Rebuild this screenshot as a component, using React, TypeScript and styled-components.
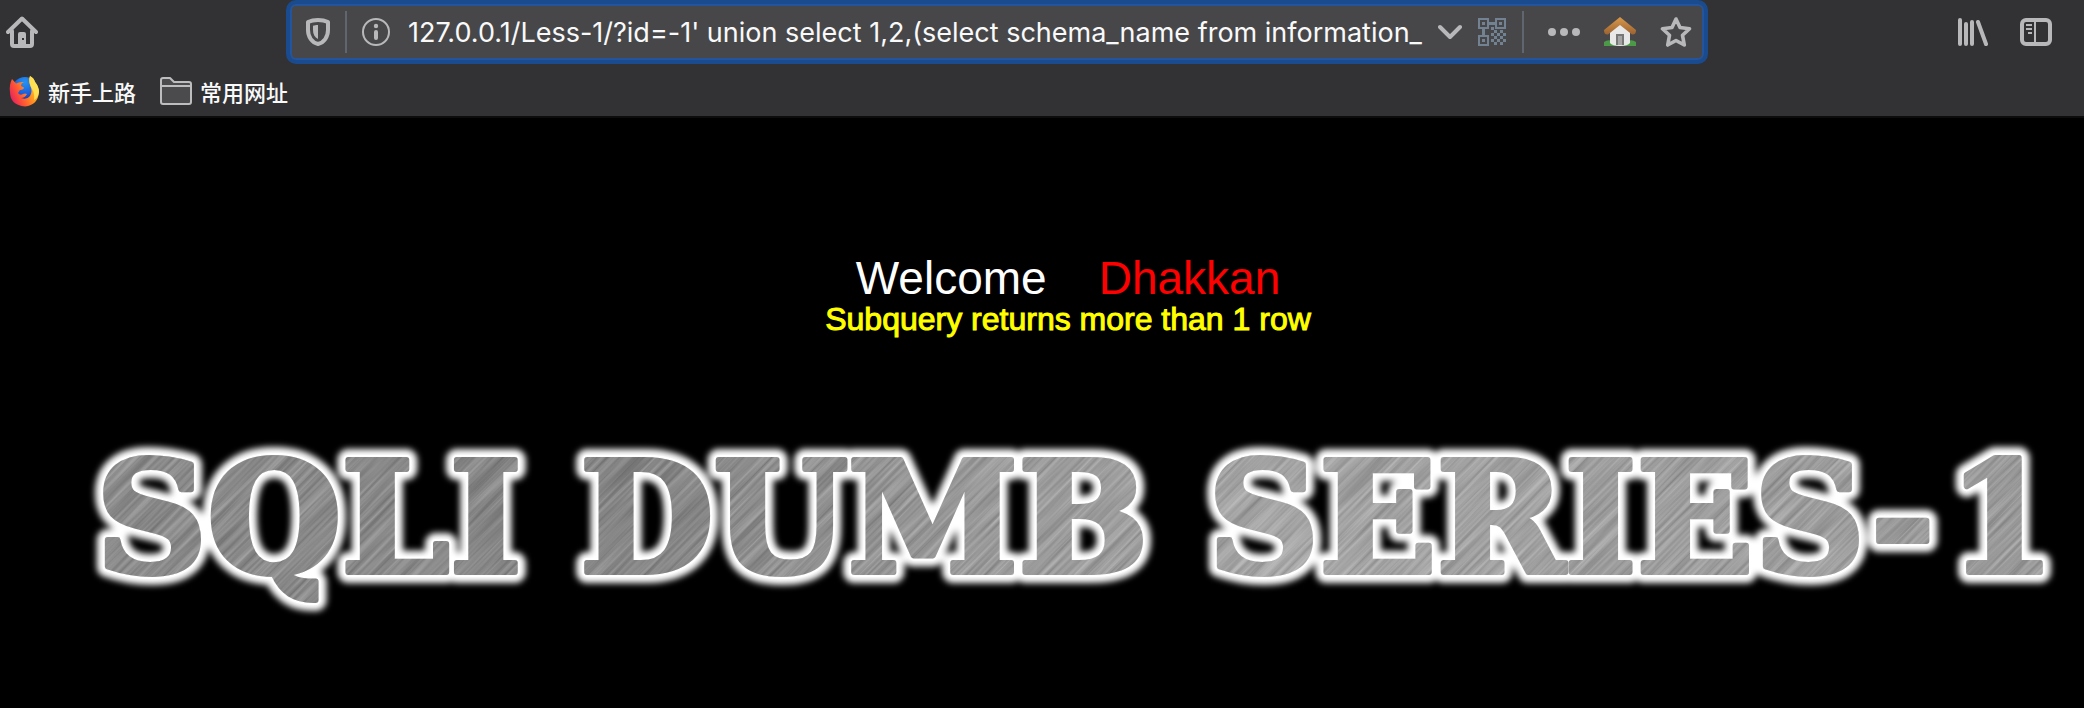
import React from "react";
import styled, { createGlobalStyle } from "styled-components";

const GlobalStyle = createGlobalStyle`
  * { box-sizing: border-box; }
  html, body { margin: 0; background: #000; }
  body { font-family: "Liberation Sans", "Noto Sans CJK SC", sans-serif; }
  svg { display: block; }
`;

const Chrome = styled.header`
  background: #323234;
  border-bottom: 2px solid #0c0c0d;
`;

const NavBar = styled.nav`
  display: flex;
  align-items: center;
  justify-content: space-between;
  height: 64px;
  padding: 0 32px 0 6px;
`;

const IconButton = styled.button<{ $width?: number }>`
  display: flex;
  flex: none;
  align-items: center;
  justify-content: center;
  width: ${(p) => p.$width ?? 32}px;
  height: 32px;
  padding: 0;
  border: 0;
  background: none;
  color: #b8b8ba;
`;

const UrlBar = styled.form`
  display: flex;
  flex: 1;
  align-items: center;
  min-width: 0;
  height: 64px;
  margin: 0 250px 0 248px;
  padding: 0 12px 0 16px;
  border: 4px solid #1a4b8f;
  border-radius: 10px;
  background: #474749;
  box-shadow: inset 0 0 0 2px #24559c;
`;

const Separator = styled.span`
  flex: none;
  width: 2px;
  height: 42px;
  background: #5f6670;
`;

const UrlInput = styled.input`
  flex: 1;
  min-width: 0;
  height: 44px;
  margin: 0 14px 0 18px;
  padding: 0;
  border: 0;
  outline: 0;
  background: none;
  color: #f9f9fa;
  font: 27px Inter, sans-serif;
`;

const Group = styled.div<{ $gap: number; $pad?: string }>`
  display: flex;
  flex: none;
  align-items: center;
  gap: ${(p) => p.$gap}px;
  padding: ${(p) => p.$pad ?? "0"};
`;

const Bookmarks = styled.nav`
  display: flex;
  align-items: center;
  gap: 24px;
  height: 52px;
  padding: 2px 8px 0;
`;

const Bookmark = styled.a`
  display: flex;
  align-items: center;
  gap: 8px;
  color: #f9f9fa;
  font: 500 22px/32px "Noto Sans CJK SC", sans-serif;
  text-decoration: none;
`;

const Message = styled.main`
  padding: 135px 0 0 52px;
  text-align: center;
`;

const Welcome = styled.h1`
  display: flex;
  justify-content: center;
  gap: 52px;
  margin: 0;
  color: #fff;
  font-size: 46px;
  font-weight: 400;
  line-height: 50px;
`;

const Name = styled.span`
  color: #f00;
`;

const ErrorText = styled.p`
  margin: 0;
  color: #ff0;
  font-size: 32px;
  line-height: 32px;
  -webkit-text-stroke: 1px #ff0;
`;

const Banner = styled.svg`
  width: 100%;
  height: auto;
  margin-top: 95px;
`;

const HomeIcon = () => (
  <svg width="32" height="32" viewBox="0 0 32 32" fill="none" stroke="currentColor" strokeLinejoin="round" strokeLinecap="round">
    <path d="M2 16 16 2.500 30 16" strokeWidth="4" />
    <path d="M6 15V28q0 2 2 2H24q2 0 2-2V15" strokeWidth="4" />
    <path d="M12 30V18q0-2 2-2h4q2 0 2 2V30z" fill="currentColor" stroke="none" />
    <rect x="16" y="22" width="2" height="2" fill="#323234" stroke="none" />
  </svg>
);

const ShieldIcon = () => (
  <svg width="24" height="28" viewBox="0 0 24 28">
    <path d="M12 2C8 2 5 2.600 2 4v8c0 7 4 12.500 10 14 6-1.500 10-7 10-14V4C19 2.600 16 2 12 2z" fill="none" stroke="currentColor" strokeWidth="4" strokeLinejoin="round" />
    <path d="M12 7c-2 0-3.500.3-5 .8V12c0 4 1.700 7.500 5 9z" fill="currentColor" />
  </svg>
);

const InfoIcon = () => (
  <svg width="28" height="28" viewBox="0 0 28 28" fill="currentColor">
    <circle cx="14" cy="14" r="13" fill="none" stroke="currentColor" strokeWidth="2" />
    <circle cx="14" cy="8" r="2.200" />
    <rect x="12" y="12" width="4" height="10" rx="2" />
  </svg>
);

const ChevronIcon = () => (
  <svg width="24" height="16" viewBox="0 0 24 16" fill="none" stroke="currentColor" strokeWidth="4" strokeLinecap="round" strokeLinejoin="round">
    <path d="m2 3 10 10L22 3" />
  </svg>
);

const qrFinders = [[0, 0], [17, 0], [0, 17]];

const qrCells = [
  [13, 9], [16, 12], [22, 12], [13, 15], [19, 15], [25, 15],
  [16, 18], [22, 18], [13, 21], [19, 21], [16, 24], [25, 21], [22, 24],
];

const QrIcon = () => (
  <svg width="28" height="28" viewBox="0 0 28 28" fill="#738292">
    {qrFinders.map(([x, y]) => (
      <g key={`${x}-${y}`}>
        <rect x={x + 1} y={y + 1} width="9" height="9" fill="none" stroke="#738292" strokeWidth="2" />
        <rect x={x + 4} y={y + 4} width="3" height="3" />
      </g>
    ))}
    <rect x="11" y="4" width="6" height="3" />
    <rect x="4" y="11" width="3" height="6" />
    {qrCells.map(([x, y]) => (
      <rect key={`${x}-${y}`} x={x} y={y} width="3" height="3" />
    ))}
  </svg>
);

const DotsIcon = () => (
  <svg width="32" height="8" viewBox="0 0 32 8" fill="currentColor">
    <circle cx="4" cy="4" r="4" />
    <circle cx="16" cy="4" r="4" />
    <circle cx="28" cy="4" r="4" />
  </svg>
);

const CottageIcon = () => (
  <svg width="32" height="30" viewBox="0 0 32 30">
    <defs>
      <linearGradient id="roof" x1="0" y1="0" x2="0" y2="1">
        <stop offset="0" stopColor="#d9994c" />
        <stop offset="1" stopColor="#9c6230" />
      </linearGradient>
    </defs>
    <path d="M0 25q4-3 8-1h16q4-2 8 1v4H0z" fill="#4c9a48" />
    <path d="M6 14 16 5l10 9v12q-2 3-10 3T6 26z" fill="#e8e8e8" />
    <path d="M12 17h8v11h-8z" fill="#777" />
    <path d="M14 19h4v9h-4z" fill="#a5a5a5" />
    <path d="M16 0 0 13q0 5 4 4.500L16 8l12 9.500q4 .5 4-4.500z" fill="url(#roof)" />
  </svg>
);

const StarIcon = () => (
  <svg width="32" height="32" viewBox="0 0 32 32" fill="none" stroke="currentColor" strokeWidth="3.600" strokeLinejoin="round">
    <path d="m16 3 4 8.500 9.500 1.200-7 6.600 1.800 9.700L16 24.500 7.700 29l1.800-9.700-7-6.600L12 11.500z" />
  </svg>
);

const LibraryIcon = () => (
  <svg width="30" height="28" viewBox="0 0 30 28" fill="none" stroke="currentColor" strokeWidth="4" strokeLinecap="round">
    <path d="M2 2v24M8 6v20M14 4v22M20 4l8 22" />
  </svg>
);

const SidebarIcon = () => (
  <svg width="32" height="28" viewBox="0 0 32 28" fill="none" stroke="currentColor">
    <rect x="2" y="2" width="28" height="24" rx="4" strokeWidth="4" />
    <path d="M15 3v22M6 7h6M6 11h6M8 15h4" strokeWidth="2" />
  </svg>
);

const FirefoxIcon = () => (
  <svg width="32" height="32" viewBox="0 0 32 32">
    <defs>
      <linearGradient id="fox" x1="1" y1="0.200" x2="0.050" y2="0.700">
        <stop offset="0" stopColor="#ffd83a" />
        <stop offset="0.400" stopColor="#ff9a1f" />
        <stop offset="0.750" stopColor="#ff5136" />
        <stop offset="1" stopColor="#e8285a" />
      </linearGradient>
      <radialGradient id="globe" cx="0.500" cy="0.200" r="0.800">
        <stop offset="0" stopColor="#2594f2" />
        <stop offset="0.550" stopColor="#1c5fdc" />
        <stop offset="1" stopColor="#2b1d8c" />
      </radialGradient>
    </defs>
    <circle cx="17" cy="15" r="13" fill="url(#globe)" />
    <path d="M4 4 8 8.500q3-2 8-1.500-3 1-3 4l3 1.500q0 2-4 2.500l-2 3q2 3 5 1 2-1 4 0-2 4-6 4 6 2 9-2 3-5 0-11-2-5 0-9 4 2 5 6 4 5 4 10Q30 30 17 31.500 2 30 2 17 1 10 4 4z" fill="url(#fox)" />
    <path d="M22 1q4 2 5 6 4 5 4 10-1 6-5 8 1-6-2-11-4-7-2-13z" fill="#ffe65a" opacity=".85" />
  </svg>
);

const FolderIcon = () => (
  <svg width="32" height="28" viewBox="0 0 32 28" stroke="#bdbdbf" strokeWidth="2" strokeLinejoin="round">
    <path d="M1 25V3q0-2 2-2h7l4 4h15q2 0 2 2v18q0 2-2 2H3q-2 0-2-2z" fill="#4b4b4d" />
    <path d="M2 9h28" />
  </svg>
);

const SeriesBanner = () => (
  <Banner viewBox="0 0 2084 200" role="img" aria-label="SQLI DUMB SERIES-1">
    <defs>
      <linearGradient id="steel" x1="0" y1="0" x2="2084" y2="0" gradientUnits="userSpaceOnUse">
        <stop offset="0" stopColor="#8c8c8c" />
        <stop offset="0.300" stopColor="#828282" />
        <stop offset="0.450" stopColor="#989898" />
        <stop offset="0.620" stopColor="#a8a8a8" />
        <stop offset="1" stopColor="#999" />
      </linearGradient>
      <filter id="glow" x="-5%" y="-30%" width="110%" height="160%">
        <feGaussianBlur stdDeviation="3" />
      </filter>
      <filter id="scratches" x="0" y="0" width="100%" height="100%" colorInterpolationFilters="sRGB">
        <feTurbulence type="fractalNoise" baseFrequency="0.008 0.3" numOctaves="3" seed="4" />
        <feColorMatrix values="1.400 0 0 0 -0.120  1.400 0 0 0 -0.120  1.400 0 0 0 -0.120  0 0 0 0 0.200" />
      </filter>
      <g id="title" fontFamily="DejaVu Serif, serif" fontWeight="700" fontSize="154" strokeLinejoin="round">
        <text x="96" y="142">SQLI</text>
        <text x="580" y="142">DUMB</text>
        <text x="1208" y="142">SERIES-</text>
        <text x="1948" y="142">1</text>
      </g>
      <mask id="face" maskUnits="userSpaceOnUse" x="0" y="0" width="2084" height="200">
        <use href="#title" fill="#fff" stroke="#fff" strokeWidth="6" />
      </mask>
    </defs>
    <use href="#title" fill="#fff" stroke="#fff" strokeWidth="22" filter="url(#glow)" />
    <use href="#title" fill="#fff" stroke="#fff" strokeWidth="10" />
    <g mask="url(#face)">
      <rect width="2084" height="200" fill="url(#steel)" />
      <g transform="rotate(-45 1042 100)">
        <rect x="200" y="-800" width="1684" height="1800" filter="url(#scratches)" />
      </g>
    </g>
  </Banner>
);

export default function App() {
  return (
    <>
      <GlobalStyle />
      <Chrome>
        <NavBar aria-label="Navigation">
          <IconButton aria-label="Home"><HomeIcon /></IconButton>
          <UrlBar onSubmit={(e) => e.preventDefault()}>
            <Group $gap={15}>
              <IconButton type="button" $width={24} aria-label="Tracking protection"><ShieldIcon /></IconButton>
              <Separator />
              <IconButton type="button" $width={28} aria-label="Site information"><InfoIcon /></IconButton>
            </Group>
            <UrlInput
              aria-label="Address"
              spellCheck={false}
              defaultValue="127.0.0.1/Less-1/?id=-1' union select 1,2,(select schema_name from information_"
            />
            <Group $gap={16}>
              <IconButton type="button" $width={24} aria-label="History"><ChevronIcon /></IconButton>
              <IconButton type="button" $width={28} aria-label="QR code"><QrIcon /></IconButton>
              <Separator />
            </Group>
            <Group $gap={24} $pad="0 0 0 24px">
              <IconButton type="button" aria-label="Page actions"><DotsIcon /></IconButton>
              <IconButton type="button" aria-label="Home page"><CottageIcon /></IconButton>
              <IconButton type="button" aria-label="Bookmark this page"><StarIcon /></IconButton>
            </Group>
          </UrlBar>
          <Group $gap={32}>
            <IconButton $width={30} aria-label="Library"><LibraryIcon /></IconButton>
            <IconButton aria-label="Sidebars"><SidebarIcon /></IconButton>
          </Group>
        </NavBar>
        <Bookmarks aria-label="Bookmarks">
          <Bookmark href="#start"><FirefoxIcon />新手上路</Bookmark>
          <Bookmark href="#sites"><FolderIcon />常用网址</Bookmark>
        </Bookmarks>
      </Chrome>
      <Message>
        <Welcome>
          <span>Welcome</span>
          <Name>Dhakkan</Name>
        </Welcome>
        <ErrorText>Subquery returns more than 1 row</ErrorText>
      </Message>
      <SeriesBanner />
    </>
  );
}
